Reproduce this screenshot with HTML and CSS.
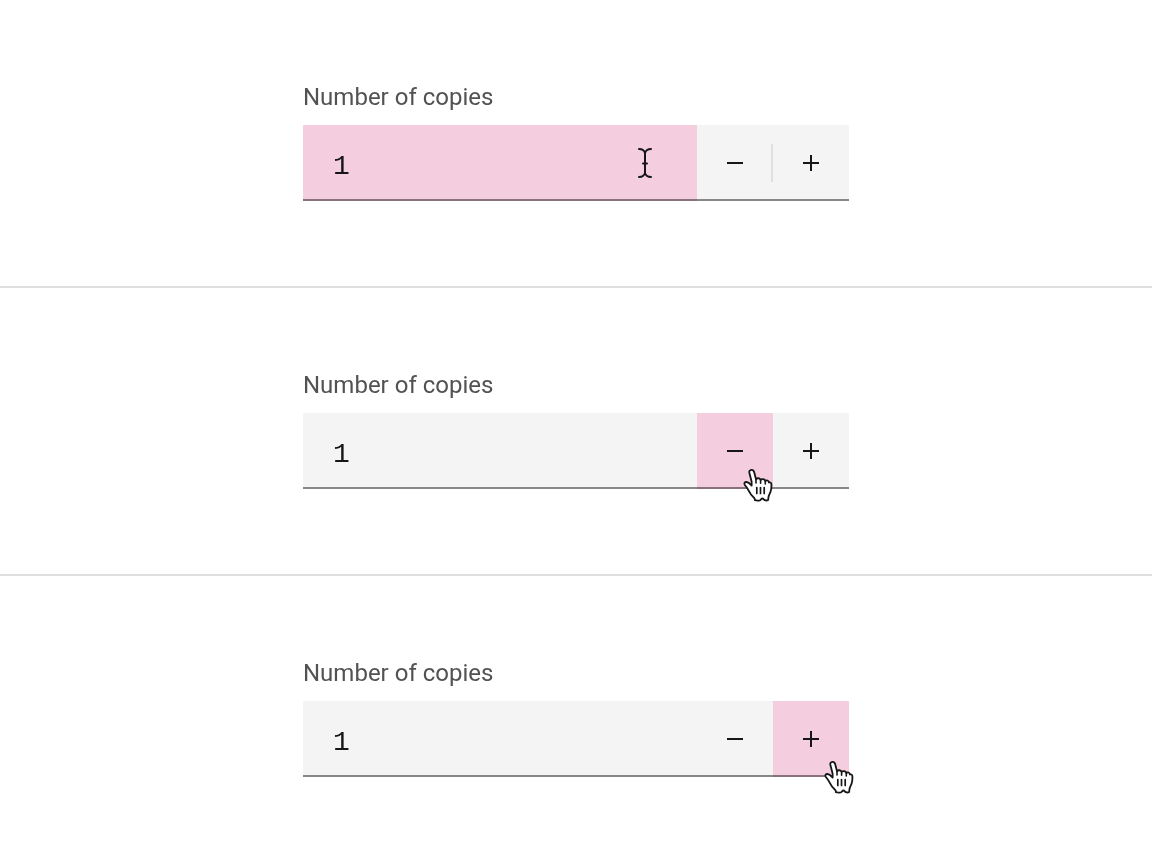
FILE: index.html
```
<!DOCTYPE html>
<html lang="en">
<head>
<meta charset="utf-8">
<title>Number input</title>
<link rel="stylesheet" href="styles.css">
</head>
<body>
<svg class="defs" aria-hidden="true">
  <symbol id="minus" viewBox="0 0 32 32"><path d="M8 15h16v2H8z"/></symbol>
  <symbol id="plus" viewBox="0 0 32 32"><path d="M17 15V8h-2v7H8v2h7v7h2v-7h7v-2z"/></symbol>
  <symbol id="hand" viewBox="0 0 34 36">
    <path d="M12.8 33.2C13 32.2 12.8 31.4 12 30.7C9.6 28.8 7.9 26.3 6.5 23.4C5.2 20.8 3.9 19.5 2.8 17.9C1.9 16.3 2.7 14.9 4.5 15C6.6 15.2 8 16.8 9.7 18.6L9.6 14.5L7.4 6C6.9 4.2 8 3 9.4 2.9C10.9 2.8 11.8 3.7 12.2 5.2L14 12.2C15 10.8 18 10.8 18.6 13C20 11.5 22.8 11.7 23.3 14C24.8 12.8 26.7 13.3 26.9 15.5C28.4 14.9 29.3 15.8 29.4 17.4C29.5 20 29.5 22.3 28.5 24.9C27.6 27.1 26.6 28.5 26.4 30.7C26.4 31.7 26.3 32.4 26 33.2C25 33.6 23.8 33.6 22.8 33.2C22 32.6 21.4 31.5 20.4 31.5C19.4 31.5 18.9 32.9 18 33.3C16.4 33.6 14.5 33.6 12.8 33.2Z" fill="#fff" stroke="#161616" stroke-width="1.8" stroke-linejoin="round"/>
    <path d="M14 12.2V16M18.6 13V16.3M23.3 14V17" fill="none" stroke="#161616" stroke-width="1.6" stroke-linecap="round"/>
    <path d="M14.8 20.5V26.5M18.5 20.5V26.5M22.2 20.5V26.5" fill="none" stroke="#161616" stroke-width="1.7" stroke-linecap="round"/>
  </symbol>
</svg>
<main class="examples">
  <section class="example">
    <div class="number">
      <label class="number-label" for="copies-a">Number of copies</label>
      <div class="field">
        <input class="value target" id="copies-a" type="text" inputmode="numeric" value="1">
        <button class="step" type="button" aria-label="Decrease"><svg class="icon"><use href="#minus"/></svg></button>
        <span class="rule"></span>
        <button class="step" type="button" aria-label="Increase"><svg class="icon"><use href="#plus"/></svg></button>
        <svg class="cursor ibeam" viewBox="0 0 18 34" aria-hidden="true"><path d="M3 3C6 3 8.2 4.3 9 7C9.8 4.3 12 3 15 3M9 7V27M3 31C6 31 8.2 29.7 9 27C9.8 29.7 12 31 15 31M7 17.5H11"/></svg>
      </div>
    </div>
  </section>
  <section class="example">
    <div class="number">
      <label class="number-label" for="copies-b">Number of copies</label>
      <div class="field">
        <input class="value" id="copies-b" type="text" inputmode="numeric" value="1">
        <button class="step target" type="button" aria-label="Decrease"><svg class="icon"><use href="#minus"/></svg></button>
        <button class="step" type="button" aria-label="Increase"><svg class="icon"><use href="#plus"/></svg></button>
        <svg class="cursor hand on-minus" aria-hidden="true"><use href="#hand"/></svg>
      </div>
    </div>
  </section>
  <section class="example">
    <div class="number">
      <label class="number-label" for="copies-c">Number of copies</label>
      <div class="field">
        <input class="value" id="copies-c" type="text" inputmode="numeric" value="1">
        <button class="step" type="button" aria-label="Decrease"><svg class="icon"><use href="#minus"/></svg></button>
        <button class="step target" type="button" aria-label="Increase"><svg class="icon"><use href="#plus"/></svg></button>
        <svg class="cursor hand on-plus" aria-hidden="true"><use href="#hand"/></svg>
      </div>
    </div>
  </section>
</main>
</body>
</html>
```

FILE: styles.css
```
* {
  box-sizing: border-box;
}

body {
  margin: 0;
  background: #fff;
  color: #161616;
  font-family: Roboto, "Liberation Sans", sans-serif;
}

.defs {
  position: absolute;
  width: 0;
  height: 0;
}

.example {
  padding: 81px 24px 85px;
  border-bottom: 2px solid #e0e0e0;
}

.example:last-child {
  border-bottom: 0;
}

.number {
  max-width: 546px;
  margin: 0 auto;
}

.number-label {
  display: block;
  margin-bottom: 12px;
  color: #525252;
  font-size: 24px;
  line-height: 32px;
}

.field {
  position: relative;
  display: flex;
  height: 76px;
  background: #f4f4f4;
}

.field::after {
  content: "";
  position: absolute;
  inset: auto 0 0;
  height: 2px;
  background: #8d8d8d;
  mix-blend-mode: multiply;
}

.value {
  flex: 1;
  min-width: 0;
  padding: 6px 32px 0 30px;
  border: 0;
  border-radius: 0;
  outline: 0;
  background: transparent;
  color: #161616;
  font-family: "Liberation Mono", monospace;
  font-size: 28px;
}

.step {
  display: flex;
  align-items: center;
  justify-content: center;
  width: 76px;
  padding: 0;
  border: 0;
  background: transparent;
  color: #161616;
}

.target {
  background: #f4cddf;
}

.icon {
  width: 32px;
  height: 32px;
  fill: currentColor;
}

.rule {
  align-self: center;
  width: 2px;
  height: 38px;
  margin: 0 0 0 -2px;
  background: #e0e0e0;
}

.cursor {
  position: absolute;
  z-index: 1;
  pointer-events: none;
}

.ibeam {
  top: 21px;
  right: 195px;
  width: 18px;
  height: 34px;
  fill: none;
  stroke: #161616;
  stroke-width: 2;
  stroke-linecap: round;
}

.hand {
  width: 34px;
  height: 36px;
}

.on-minus {
  top: 54px;
  right: 73px;
}

.on-plus {
  top: 58px;
  right: -8px;
}
```
